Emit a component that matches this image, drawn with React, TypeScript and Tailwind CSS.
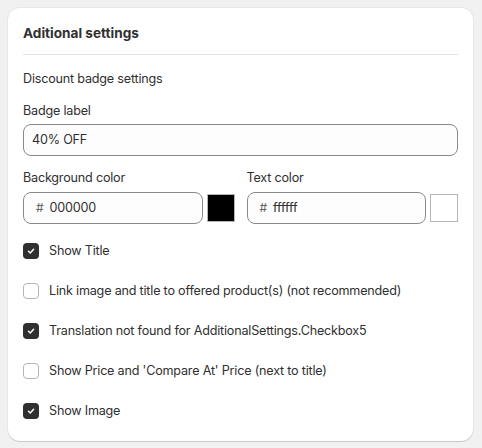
import React, { useState } from 'react';

const font = { fontFamily: 'Inter, "Noto Sans", sans-serif' };

const Check = ({ checked, label, onChange }: { checked: boolean; label: string; onChange: () => void }) => (
  <label className="flex items-center gap-[10px] h-[40px] cursor-pointer">
    <span
      onClick={onChange}
      className={`flex items-center justify-center w-[16px] h-[16px] rounded-[4px] ${checked ? 'bg-[#303030]' : 'bg-white border border-[#b5b5b5]'}`}
    >
      {checked && (
        <svg width="10" height="10" viewBox="0 0 10 10" fill="none">
          <path d="M2.5 5.2 4.3 7 7.6 3.3" stroke="white" strokeWidth="1.5" strokeLinecap="round" strokeLinejoin="round" />
        </svg>
      )}
    </span>
    <span className="text-[12.6px] tracking-[-0.2px] text-[#303030]">{label}</span>
  </label>
);

const ColorField = ({ label, value, swatch }: { label: string; value: string; swatch: string }) => (
  <div className="flex-1">
    <div className="text-[12.6px] tracking-[-0.2px] text-[#303030] h-[20px] leading-[20px] mb-[4px]">{label}</div>
    <div className="flex items-center gap-[4px]">
      <div className="flex-1 flex items-center h-[32px] rounded-[8px] border border-[#8a8a8a] bg-[#fdfdfd] px-[12px]">
        <span className="text-[12px] text-[#616161] mr-[6px]">#</span>
        <span className="text-[12.6px] tracking-[-0.2px] text-[#303030]">{value}</span>
      </div>
      <div className="w-[28px] h-[28px] border border-[#b5b5b5]" style={{ background: swatch }} />
    </div>
  </div>
);

export default function App() {
  const [checks, setChecks] = useState([true, false, true, false, true]);
  const labels = [
    'Show Title',
    'Link image and title to offered product(s) (not recommended)',
    'Translation not found for AdditionalSettings.Checkbox5',
    "Show Price and 'Compare At' Price (next to title)",
    'Show Image',
  ];

  return (
    <div className="min-h-screen bg-[#f1f1f1] p-[8px] pr-[9px]" style={font}>
      <div className="bg-white rounded-[12px] shadow-[0_1px_0_rgba(0,0,0,0.13),0_0_0_1px_rgba(0,0,0,0.04)] px-[15px] pt-[15px] pb-[10px]">
        <h2 className="text-[13.6px] font-bold text-[#303030] h-[20px] leading-[20px]">Aditional settings</h2>
        <div className="mt-[11px] border-t border-[#e3e3e3]" />
        <div className="mt-[14px] text-[12.6px] tracking-[-0.2px] text-[#303030] h-[20px] leading-[20px]">Discount badge settings</div>
        <div className="mt-[12px] text-[12.6px] tracking-[-0.2px] text-[#303030] h-[20px] leading-[20px] mb-[3px]">Badge label</div>
        <div className="flex items-center h-[32px] rounded-[8px] border border-[#8a8a8a] bg-[#fdfdfd] px-[8px] text-[12.6px] tracking-[-0.2px] text-[#303030]">
          40% OFF
        </div>
        <div className="mt-[12px] flex gap-[12px]">
          <ColorField label="Background color" value="000000" swatch="#000000" />
          <ColorField label="Text color" value="ffffff" swatch="#ffffff" />
        </div>
        <div className="mt-[7px] flex flex-col">
          {labels.map((l, i) => (
            <Check
              key={l}
              label={l}
              checked={checks[i]}
              onChange={() => setChecks(checks.map((c, j) => (j === i ? !c : c)))}
            />
          ))}
        </div>
      </div>
    </div>
  );
}
